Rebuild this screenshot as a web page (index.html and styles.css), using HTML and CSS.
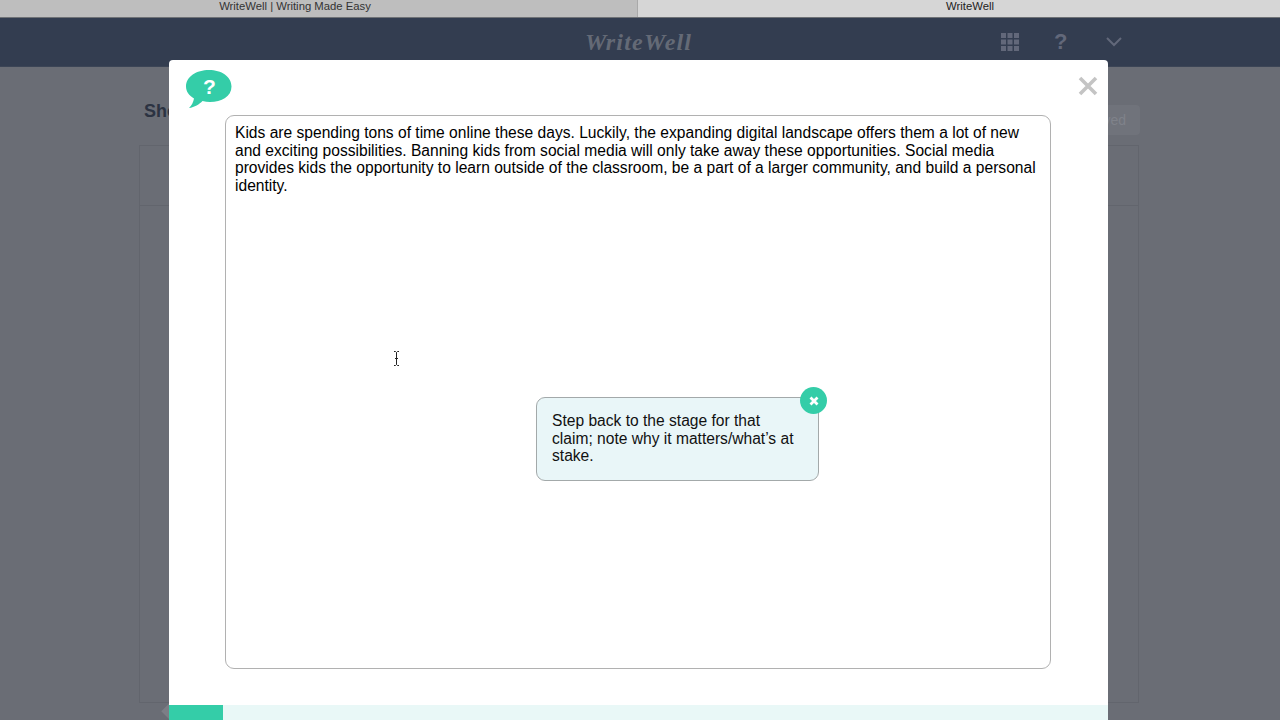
FILE: index.html
```html
<!DOCTYPE html>
<html lang="en">
<head>
<meta charset="utf-8">
<title>WriteWell</title>
<link rel="stylesheet" href="styles.css">
</head>
<body>
<div class="tabs">
  <div class="tab tab-active"><span>WriteWell | Writing Made Easy</span></div>
  <div class="tab tab-idle"><span>WriteWell</span></div>
</div>
<header class="topbar">
  <div class="logo">WriteWell</div>
  <div class="top-icons">
    <svg class="ico" width="18" height="18" viewBox="0 0 18 18" fill="#62687a">
      <rect x="0" y="0" width="5" height="5"/><rect x="6.500" y="0" width="5" height="5"/><rect x="13" y="0" width="5" height="5"/>
      <rect x="0" y="6.500" width="5" height="5"/><rect x="6.500" y="6.500" width="5" height="5"/><rect x="13" y="6.500" width="5" height="5"/>
      <rect x="0" y="13" width="5" height="5"/><rect x="6.500" y="13" width="5" height="5"/><rect x="13" y="13" width="5" height="5"/>
    </svg>
    <span class="help">?</span>
    <svg class="ico" width="16" height="10" viewBox="0 0 16 10" fill="none" stroke="#62687a" stroke-width="2"><path d="M1 1l7 7 7-7"/></svg>
  </div>
</header>
<main class="page">
  <div class="page-head">
    <h1 class="page-title">Show</h1>
    <div class="page-btn">Saved</div>
  </div>
  <div class="panel">
    <div class="panel-row"></div>
  </div>
</main>
<div class="corner"></div>
<section class="modal">
  <div class="modal-top">
    <svg class="bubble" width="48" height="40" viewBox="0 0 48 40">
      <path fill="#34cda8" d="M24 1C36.500 1 46.500 7.500 46.500 17.500S36.500 33 25 33c-2.500 0-5-.3-7.500-1-3 3-8 6.500-13.500 7 2.500-2.500 4.500-6 5-9.500C4 26.500 1 22.500 1 17.500 1 7.500 11.500 1 24 1z"/>
    </svg>
    <span class="bubble-mark">?</span>
    <svg class="close" width="20" height="20" viewBox="0 0 20 20" stroke="#c4c4c4" stroke-width="3.600" fill="none"><path d="M2 2l16 16M18 2L2 18"/></svg>
  </div>
  <div class="editor">
    <p class="editor-text">Kids are spending tons of time online these days. Luckily, the expanding digital landscape offers them a lot of new and exciting possibilities. Banning kids from social media will only take away these opportunities. Social media provides kids the opportunity to learn outside of the classroom, be a part of a larger community, and build a personal identity.</p>
    <svg class="cursor" width="7" height="15" viewBox="0 0 7 15" fill="none" stroke="#222" stroke-width="1"><path d="M1 .5h1.500l1 1 1-1H6M3.500 1.500v12M1 14.500h1.500l1-1 1 1H6M2 7.500h3"/></svg>
    <div class="tip">
      <p class="tip-text">Step back to the stage for that claim; note why it matters/what’s at stake.</p>
      <span class="tip-close">
        <svg width="10" height="10" viewBox="0 0 10 10" stroke="#fff" stroke-width="2.800" fill="none"><path d="M1.500 1.500l7 7M8.500 1.500l-7 7"/></svg>
      </span>
    </div>
  </div>
  <div class="progress"><div class="progress-fill"></div></div>
</section>
</body>
</html>
```
FILE: styles.css
```css
* { box-sizing: border-box; }
html, body { margin: 0; height: 720px; overflow: hidden; }
body {
  display: flex;
  flex-direction: column;
  background: #6a6d75;
  font-family: "Liberation Sans", Arial, sans-serif;
  position: relative;
}
.tabs { display: flex; height: 18px; border-bottom: 1px solid #6f7276; font-size: 11.300px; color: #333; flex: none; }
.tab { display: flex; align-items: center; justify-content: center; height: 17px; padding-bottom: 5px; line-height: 12px; }
.tab-active { width: 638px; background: #bebebe; padding-right: 47px; border-right: 1px solid #a9a9a9; }
.tab-idle { flex: 1; background: #d6d6d6; padding-left: 22px; color: #222; }
.topbar { flex: none; height: 49px; background: #333d50; border-bottom: 1px solid #3c4556; display: flex; align-items: center; position: relative; }
.logo {
  position: absolute; left: 585px; top: 9px;
  font-family: "Liberation Serif", serif; font-style: italic; font-weight: 700;
  font-size: 24px; line-height: 30px; letter-spacing: 1.200px; color: #646a76;
}
.top-icons { margin-left: 1001px; display: flex; align-items: center; }
.help { font-size: 22px; font-weight: 700; color: #62687a; width: 12px; margin: 0 40px 0 35px; }
.ico { display: block; }
.page { flex: 1; padding: 20px 142px 0 139px; display: flex; flex-direction: column; }
.page-head { display: flex; justify-content: space-between; height: 58px; }
.page-title { margin: 13px 0 0 5px; font-size: 18px; line-height: 22px; color: #2c3342; }
.page-btn { width: 64px; height: 30px; margin-top: 18px; margin-right: -2px; background: #70737b; border-radius: 4px; color: #7f828a; font-size: 14px; line-height: 30px; text-align: right; padding-right: 14px; }
.panel { width: 1000px; height: 558px; border: 1px solid #62656d; }
.panel-row { height: 60px; border-bottom: 1px solid #62656d; }
.corner { position: absolute; left: 158px; top: 708px; width: 11px; height: 11px; background: #7c7e86; transform: rotate(45deg); transform-origin: 100% 100%; }
.modal {
  position: absolute; left: 169px; top: 60px; width: 939px; height: 660px;
  background: #fff; border-radius: 4px 4px 0 0;
  display: flex; flex-direction: column;
}
.modal-top { height: 55px; position: relative; flex: none; }
.bubble { position: absolute; left: 16px; top: 9px; }
.bubble-mark { position: absolute; left: 34px; top: 15px; color: #fff; font-weight: 700; font-size: 21px; line-height: 24px; }
.close { position: absolute; left: 909px; top: 16px; }
.editor {
  flex: none; margin-left: 56px; width: 826px; height: 554px;
  border: 1px solid #b1b1b1; border-radius: 9px; background: #fff;
  padding: 8px 9px; position: relative;
}
.editor-text { margin: 0; font-size: 15.600px; line-height: 17.500px; color: #000; }
.cursor { position: absolute; left: 167px; top: 235px; }
.tip {
  position: absolute; left: 310px; top: 281px; width: 283px; height: 84px;
  border: 1px solid #a3a9aa; border-radius: 9px; background: #e9f6f8; padding: 14px 15px;
}
.tip-text { margin: 0; width: 245px; font-size: 15.600px; line-height: 17.500px; color: #111; }
.tip-close {
  position: absolute; left: 263px; top: -11px; width: 27px; height: 27px; border-radius: 50%;
  background: #34cda8; display: flex; align-items: center; justify-content: center;
}
.progress { margin-top: auto; height: 15px; background: #e9f8f7; flex: none; }
.progress-fill { width: 54px; height: 100%; background: #34cda8; }
```
